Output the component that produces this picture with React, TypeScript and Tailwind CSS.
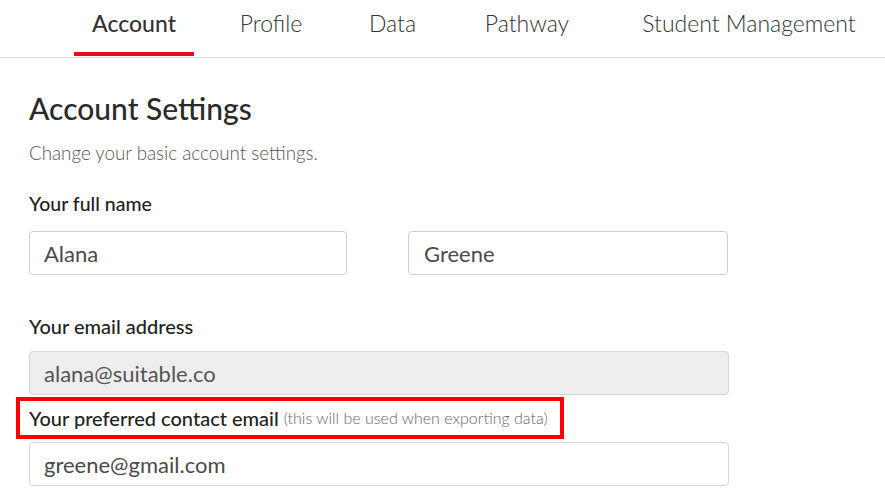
import React from "react";

const tabs = [
  { t: "Account", w: "w-[120px]" },
  { t: "Profile", w: "w-[154px]" },
  { t: "Data", w: "w-[89px]" },
  { t: "Pathway", w: "w-[180px]" },
  { t: "Student Management", w: "w-[264px]" },
];

export default function App() {
  return (
    <div className="min-h-[501px] w-[885px] overflow-hidden bg-white text-[#222]" style={{ fontFamily: "Lato, 'Open Sans', sans-serif" }}>
      <div className="flex h-[58px] border-b border-[#dcdcdc] pl-[74px]">
        {tabs.map((tab, i) => (
          <div key={tab.t} className={`relative flex h-full shrink-0 justify-center pt-[8px] ${tab.w}`}>
            <span className={`whitespace-nowrap text-[23px] leading-[30px] ${i === 0 ? "font-medium text-[#333]" : "font-light text-[#333]"}`}>{tab.t}</span>
            {i === 0 && <div className="absolute bottom-[1px] left-0 right-0 h-[4px] bg-[#dd1111]" />}
          </div>
        ))}
      </div>
      <div className="w-[760px] pl-[29px] pt-[32px]">
        <h1 className="text-[30px] leading-[36px] font-medium text-[#2a2a2a]">Account Settings</h1>
        <p className="mt-[16px] text-[18.8px] leading-[22px] font-light text-[#555]">Change your basic account settings.</p>
        <div className="mt-[28px] text-[19.5px] leading-[24px] font-medium text-[#222]">Your full name</div>
        <div className="mt-[15px] flex gap-[61px]">
          <div className="flex h-[44px] w-[318px] items-center rounded-[4px] border border-[#cfcfcf] px-[14px] text-[22px] text-[#4a4a4a]">Alana</div>
          <div className="flex h-[44px] w-[320px] items-center rounded-[4px] border border-[#cfcfcf] px-[15px] text-[22px] text-[#4a4a4a]">Greene</div>
        </div>
        <div className="mt-[39px] text-[20px] leading-[24px] font-medium text-[#222]">Your email address</div>
        <div className="mt-[13px] flex h-[44px] w-[700px] items-center rounded-[4px] border border-[#d6d6d6] bg-[#eeeeee] px-[14px] text-[22px] text-[#555]">alana@suitable.co</div>
        <div className="mt-[2px] -ml-[13px] flex h-[42px] w-[548px] items-center border-[4px] border-[#ff0000] pl-[9px]">
          <span className="whitespace-nowrap text-[20px] font-medium text-[#222]">Your preferred contact email</span>
          <span className="ml-[5px] whitespace-nowrap text-[16px] font-light text-[#666]">(this will be used when exporting data)</span>
        </div>
        <div className="mt-[3px] flex h-[44px] w-[700px] items-center rounded-[4px] border border-[#d6d6d6] px-[14px] text-[22px] text-[#4a4a4a]">greene@gmail.com</div>
      </div>
    </div>
  );
}
